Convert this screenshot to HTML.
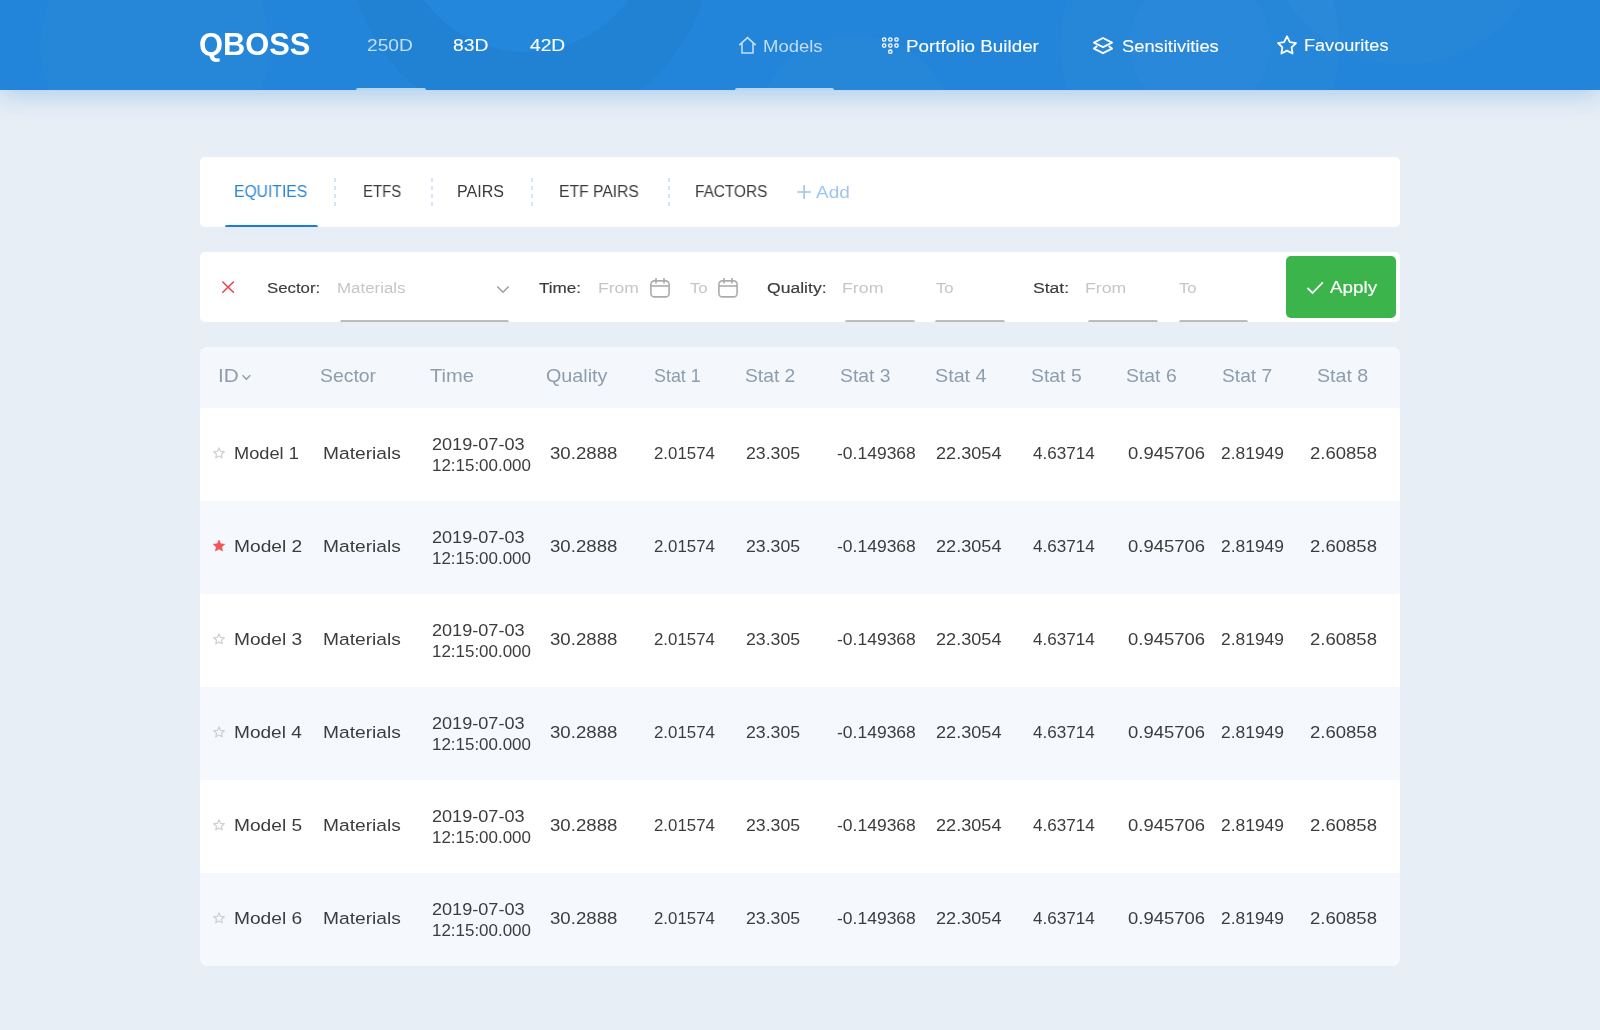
<!DOCTYPE html>
<html><head><meta charset="utf-8">
<style>
html,body{margin:0;padding:0;}
body{width:1600px;height:1030px;overflow:hidden;background:#e7eef6;position:relative;font-family:"Liberation Sans",sans-serif;}
.t{position:absolute;white-space:nowrap;line-height:1;transform-origin:0 0;will-change:transform;}
.abs{position:absolute;}
#hdr{position:absolute;left:0;top:0;width:1600px;height:90px;background:#2285d9;overflow:hidden;}
#hshadow{position:absolute;left:0;top:0;width:1600px;height:90px;box-shadow:0 4px 24px rgba(40,130,215,0.32);}
.card{position:absolute;background:#fff;border-radius:5px;}
.row{position:absolute;left:200px;width:1200px;height:93px;}
</style></head><body>
<div id="hshadow"></div>
<div id="hdr">
  <svg class="abs" style="left:0;top:0" width="1600" height="90">
    <circle cx="155" cy="45" r="115" fill="#ffffff" opacity="0.018"/>
    <circle cx="530" cy="-52" r="180" fill="#000000" opacity="0.02"/>
    <circle cx="526" cy="-75" r="127" fill="#2388dc"/>
    <circle cx="855" cy="135" r="100" fill="#ffffff" opacity="0.018"/>
    <circle cx="1200" cy="45" r="140" fill="#ffffff" opacity="0.018"/>
    <circle cx="1200" cy="45" r="70" fill="#ffffff" opacity="0.015"/>
    <circle cx="1405" cy="-75" r="140" fill="#ffffff" opacity="0.02"/>
  </svg>
  <div class="abs" style="left:356px;top:88px;width:70px;height:2px;background:#b6d7f4;border-radius:2px 2px 0 0"></div>
  <div class="abs" style="left:734.5px;top:88px;width:99.5px;height:2px;background:#b6d7f4;border-radius:2px 2px 0 0"></div>
  <svg class="abs" style="left:0;top:0" width="1600" height="90" fill="none">
    <!-- house -->
    <path d="M739.3 45.2 L747.5 37.6 L755.7 45.2 M742 43 V53 H753 V43" stroke="#c3ddf6" stroke-width="1.6" stroke-linejoin="miter"/>
    <!-- keypad -->
    <g stroke="#fff" stroke-width="1.3">
      <circle cx="884.2" cy="39.5" r="1.7"/><circle cx="890.3" cy="39.5" r="1.7"/><circle cx="896.5" cy="39.5" r="1.7"/>
      <circle cx="884.2" cy="45.6" r="1.7"/><circle cx="890.3" cy="45.6" r="1.7"/><circle cx="896.5" cy="45.6" r="1.7"/>
      <circle cx="890.3" cy="51.7" r="1.7"/>
    </g>
    <!-- layers -->
    <path d="M1103 38 L1112 42.6 L1103 47.2 L1094 42.6 Z" stroke="#fff" stroke-width="1.9" stroke-linejoin="round"/>
    <path d="M1097.3 46 L1094 48.6 L1103 53.2 L1112 48.6 L1108.7 46" stroke="#fff" stroke-width="1.9" stroke-linejoin="round"/>
    <!-- star -->
    <path d="M1287 36.3 L1289.9 42.2 L1296 43.1 L1291.6 47.4 L1292.6 53.5 L1287 50.6 L1281.4 53.5 L1282.4 47.4 L1278 43.1 L1284.1 42.2 Z" stroke="#fff" stroke-width="1.8" stroke-linejoin="round"/>
  </svg>
</div>

<!-- tab card -->
<div class="card" style="left:200px;top:157px;width:1200px;height:70px;"></div>
<div class="abs" style="left:225px;top:225px;width:93px;height:2px;background:#1a7cd6;border-radius:2px 2px 0 0;box-shadow:0 0 14px rgba(26,124,214,0.10)"></div>
<svg class="abs" style="left:0;top:0" width="1600" height="330" fill="none">
  <g stroke="#d3e5f6" stroke-width="2" stroke-dasharray="4 4">
    <line x1="335" y1="178" x2="335" y2="208"/>
    <line x1="432" y1="178" x2="432" y2="208"/>
    <line x1="532" y1="178" x2="532" y2="208"/>
    <line x1="669" y1="178" x2="669" y2="208"/>
  </g>
  <path d="M804.1 185 V199 M797.2 192 H811" stroke="#9dc6ee" stroke-width="1.6"/>
</svg>

<!-- filter card -->
<div class="card" style="left:200px;top:252px;width:1200px;height:70px;"></div>
<div class="abs" style="left:1286px;top:256px;width:110px;height:62px;background:#3bb44b;border-radius:5px"></div>
<svg class="abs" style="left:0;top:0" width="1600" height="330" fill="none">
  <path d="M222.8 282 L233.4 292.3 M233.4 282 L222.8 292.3" stroke="#e8474d" stroke-width="1.6" stroke-linecap="round"/>
  <path d="M497.3 286.5 L503 292.2 L508.7 286.5" stroke="#a0a0a0" stroke-width="1.6"/>
  <g stroke="#ababab" stroke-width="1.6">
    <rect x="650.9" y="280.9" width="18.2" height="16" rx="3.5"/>
    <line x1="651" y1="286" x2="669" y2="286"/>
    <line x1="656" y1="278" x2="656" y2="283.5"/>
    <line x1="664" y1="278" x2="664" y2="283.5"/>
    <rect x="718.9" y="280.9" width="18.2" height="16" rx="3.5"/>
    <line x1="719" y1="286" x2="737" y2="286"/>
    <line x1="724" y1="278" x2="724" y2="283.5"/>
    <line x1="732" y1="278" x2="732" y2="283.5"/>
  </g>
  <path d="M1307.5 288 L1312.5 293 L1322.8 282.3" stroke="#fff" stroke-width="1.8"/>
</svg>
<div class="abs" style="left:339.5px;top:320px;width:169.5px;height:2px;background:#bcbcbc;border-radius:2px 2px 0 0"></div>
<div class="abs" style="left:845.3px;top:320px;width:69.5px;height:2px;background:#bcbcbc;border-radius:2px 2px 0 0"></div>
<div class="abs" style="left:935.2px;top:320px;width:69.7px;height:2px;background:#bcbcbc;border-radius:2px 2px 0 0"></div>
<div class="abs" style="left:1088.3px;top:320px;width:69.7px;height:2px;background:#bcbcbc;border-radius:2px 2px 0 0"></div>
<div class="abs" style="left:1178.5px;top:320px;width:69.5px;height:2px;background:#bcbcbc;border-radius:2px 2px 0 0"></div>

<!-- table -->
<div class="abs" style="left:200px;top:347px;width:1200px;height:619px;border-radius:8px;overflow:hidden;background:#fff">
  <div class="abs" style="left:0;top:0;width:1200px;height:61px;background:#f4f8fd"></div>
  <div class="abs" style="left:0;top:154px;width:1200px;height:93px;background:#f5f9fe"></div>
  <div class="abs" style="left:0;top:340px;width:1200px;height:93px;background:#f5f9fe"></div>
  <div class="abs" style="left:0;top:526px;width:1200px;height:93px;background:#f5f9fe"></div>
</div>
<svg class="abs" style="left:0;top:0" width="1600" height="1030" fill="none">
  <path d="M242.5 375.3 L246.4 379.2 L250.3 375.3" stroke="#8d9dac" stroke-width="1.4"/>
  <g id="stars" stroke-linejoin="round">
  </g>
</svg>
<div class="t" style="left:199.04px;top:29.04px;font-size:30.55px;color:#fff;font-weight:700;transform:scaleX(1.0088);">QBOSS</div>
<div class="t" style="left:366.98px;top:37.37px;font-size:16.45px;color:#c3ddf6;transform:scaleX(1.1656);">250D</div>
<div class="t" style="left:453.32px;top:37.37px;font-size:16.45px;color:#fff;transform:scaleX(1.1757);-webkit-text-stroke:0.1px #fff;">83D</div>
<div class="t" style="left:529.86px;top:37.37px;font-size:16.45px;color:#fff;transform:scaleX(1.1674);-webkit-text-stroke:0.1px #fff;">42D</div>
<div class="t" style="left:763.21px;top:38.39px;font-size:17.02px;color:#c3ddf6;transform:scaleX(1.0863);">Models</div>
<div class="t" style="left:906.26px;top:38.82px;font-size:16.87px;color:#fff;transform:scaleX(1.1166);-webkit-text-stroke:0.1px #fff;">Portfolio Builder</div>
<div class="t" style="left:1121.59px;top:39.01px;font-size:16.95px;color:#fff;transform:scaleX(1.0818);-webkit-text-stroke:0.1px #fff;">Sensitivities</div>
<div class="t" style="left:1304.41px;top:38.04px;font-size:16.73px;color:#fff;transform:scaleX(1.0820);-webkit-text-stroke:0.1px #fff;">Favourites</div>
<div class="t" style="left:234.27px;top:184.46px;font-size:16.00px;color:#2a86d6;transform:scaleX(0.9801);">EQUITIES</div>
<div class="t" style="left:362.83px;top:184.46px;font-size:16.00px;color:#3b3b3b;transform:scaleX(0.9333);">ETFS</div>
<div class="t" style="left:456.75px;top:184.46px;font-size:16.00px;color:#3b3b3b;transform:scaleX(1.0028);">PAIRS</div>
<div class="t" style="left:558.78px;top:184.46px;font-size:16.00px;color:#3b3b3b;transform:scaleX(0.9796);">ETF PAIRS</div>
<div class="t" style="left:694.80px;top:184.46px;font-size:16.00px;color:#3b3b3b;transform:scaleX(0.9622);">FACTORS</div>
<div class="t" style="left:816.40px;top:183.59px;font-size:16.44px;color:#9dc6ee;transform:scaleX(1.1571);">Add</div>
<div class="t" style="left:266.88px;top:281.46px;font-size:14.69px;color:#3b3b3b;transform:scaleX(1.1441);-webkit-text-stroke:0.15px #3b3b3b;">Sector:</div>
<div class="t" style="left:336.56px;top:281.46px;font-size:14.69px;color:#c6c6c6;transform:scaleX(1.1492);">Materials</div>
<div class="t" style="left:539.06px;top:281.46px;font-size:14.69px;color:#3b3b3b;transform:scaleX(1.1639);-webkit-text-stroke:0.15px #3b3b3b;">Time:</div>
<div class="t" style="left:597.51px;top:281.46px;font-size:14.69px;color:#c6c6c6;transform:scaleX(1.1938);">From</div>
<div class="t" style="left:689.57px;top:281.46px;font-size:14.69px;color:#c6c6c6;transform:scaleX(1.1350);">To</div>
<div class="t" style="left:766.55px;top:281.46px;font-size:14.69px;color:#3b3b3b;transform:scaleX(1.1958);-webkit-text-stroke:0.15px #3b3b3b;">Quality:</div>
<div class="t" style="left:842.19px;top:281.46px;font-size:14.69px;color:#c6c6c6;transform:scaleX(1.2093);">From</div>
<div class="t" style="left:935.87px;top:281.46px;font-size:14.69px;color:#c6c6c6;transform:scaleX(1.1350);">To</div>
<div class="t" style="left:1033.35px;top:281.46px;font-size:14.69px;color:#3b3b3b;transform:scaleX(1.1947);-webkit-text-stroke:0.15px #3b3b3b;">Stat:</div>
<div class="t" style="left:1085.10px;top:281.46px;font-size:14.69px;color:#c6c6c6;transform:scaleX(1.2031);">From</div>
<div class="t" style="left:1178.57px;top:281.46px;font-size:14.69px;color:#c6c6c6;transform:scaleX(1.1350);">To</div>
<div class="t" style="left:1330.00px;top:279.52px;font-size:16.87px;color:#fff;transform:scaleX(1.1157);-webkit-text-stroke:0.15px #fff;">Apply</div>
<div class="t" style="left:218.10px;top:368.18px;font-size:17.75px;color:#8d9dac;transform:scaleX(1.1672);">ID</div>
<div class="t" style="left:319.64px;top:368.18px;font-size:17.75px;color:#8d9dac;transform:scaleX(1.0933);">Sector</div>
<div class="t" style="left:430.48px;top:368.18px;font-size:17.75px;color:#8d9dac;transform:scaleX(1.1322);">Time</div>
<div class="t" style="left:546.33px;top:368.18px;font-size:17.75px;color:#8d9dac;transform:scaleX(1.1126);">Quality</div>
<div class="t" style="left:653.82px;top:368.18px;font-size:17.75px;color:#8d9dac;transform:scaleX(1.0084);">Stat 1</div>
<div class="t" style="left:745.05px;top:368.18px;font-size:17.75px;color:#8d9dac;transform:scaleX(1.0846);">Stat 2</div>
<div class="t" style="left:839.95px;top:368.18px;font-size:17.75px;color:#8d9dac;transform:scaleX(1.0883);">Stat 3</div>
<div class="t" style="left:934.63px;top:368.18px;font-size:17.75px;color:#8d9dac;transform:scaleX(1.1111);">Stat 4</div>
<div class="t" style="left:1031.04px;top:368.18px;font-size:17.75px;color:#8d9dac;transform:scaleX(1.0927);">Stat 5</div>
<div class="t" style="left:1126.14px;top:368.18px;font-size:17.75px;color:#8d9dac;transform:scaleX(1.0927);">Stat 6</div>
<div class="t" style="left:1221.65px;top:368.18px;font-size:17.75px;color:#8d9dac;transform:scaleX(1.0824);">Stat 7</div>
<div class="t" style="left:1317.03px;top:368.18px;font-size:17.75px;color:#8d9dac;transform:scaleX(1.1039);">Stat 8</div>
<div class="t" style="left:233.55px;top:445.25px;font-size:17.31px;color:#3c3c3c;transform:scaleX(1.0537);">Model 1</div>
<div class="t" style="left:322.78px;top:445.25px;font-size:17.31px;color:#3c3c3c;transform:scaleX(1.1088);">Materials</div>
<div class="t" style="left:432.46px;top:435.92px;font-size:16.17px;color:#3c3c3c;transform:scaleX(1.1198);">2019-07-03</div>
<div class="t" style="left:432.03px;top:458.03px;font-size:16.74px;color:#3c3c3c;transform:scaleX(1.0128);">12:15:00.000</div>
<div class="t" style="left:550.20px;top:445.75px;font-size:16.60px;color:#3c3c3c;transform:scaleX(1.1234);">30.2888</div>
<div class="t" style="left:653.91px;top:445.75px;font-size:16.60px;color:#3c3c3c;transform:scaleX(1.0145);">2.01574</div>
<div class="t" style="left:746.27px;top:445.75px;font-size:16.60px;color:#3c3c3c;transform:scaleX(1.0660);">23.305</div>
<div class="t" style="left:837.11px;top:445.75px;font-size:16.60px;color:#3c3c3c;transform:scaleX(1.0549);">-0.149368</div>
<div class="t" style="left:935.95px;top:445.75px;font-size:16.60px;color:#3c3c3c;transform:scaleX(1.0911);">22.3054</div>
<div class="t" style="left:1033.01px;top:445.75px;font-size:16.60px;color:#3c3c3c;transform:scaleX(1.0295);">4.63714</div>
<div class="t" style="left:1127.51px;top:445.75px;font-size:16.60px;color:#3c3c3c;transform:scaleX(1.1118);">0.945706</div>
<div class="t" style="left:1221.08px;top:445.75px;font-size:16.60px;color:#3c3c3c;transform:scaleX(1.0496);">2.81949</div>
<div class="t" style="left:1310.02px;top:445.75px;font-size:16.60px;color:#3c3c3c;transform:scaleX(1.1162);">2.60858</div>
<div class="t" style="left:233.77px;top:538.25px;font-size:17.31px;color:#3c3c3c;transform:scaleX(1.1095);">Model 2</div>
<div class="t" style="left:322.78px;top:538.25px;font-size:17.31px;color:#3c3c3c;transform:scaleX(1.1088);">Materials</div>
<div class="t" style="left:432.46px;top:528.92px;font-size:16.17px;color:#3c3c3c;transform:scaleX(1.1198);">2019-07-03</div>
<div class="t" style="left:432.03px;top:551.03px;font-size:16.74px;color:#3c3c3c;transform:scaleX(1.0128);">12:15:00.000</div>
<div class="t" style="left:550.20px;top:538.75px;font-size:16.60px;color:#3c3c3c;transform:scaleX(1.1234);">30.2888</div>
<div class="t" style="left:653.91px;top:538.75px;font-size:16.60px;color:#3c3c3c;transform:scaleX(1.0145);">2.01574</div>
<div class="t" style="left:746.27px;top:538.75px;font-size:16.60px;color:#3c3c3c;transform:scaleX(1.0660);">23.305</div>
<div class="t" style="left:837.11px;top:538.75px;font-size:16.60px;color:#3c3c3c;transform:scaleX(1.0549);">-0.149368</div>
<div class="t" style="left:935.95px;top:538.75px;font-size:16.60px;color:#3c3c3c;transform:scaleX(1.0911);">22.3054</div>
<div class="t" style="left:1033.01px;top:538.75px;font-size:16.60px;color:#3c3c3c;transform:scaleX(1.0295);">4.63714</div>
<div class="t" style="left:1127.51px;top:538.75px;font-size:16.60px;color:#3c3c3c;transform:scaleX(1.1118);">0.945706</div>
<div class="t" style="left:1221.08px;top:538.75px;font-size:16.60px;color:#3c3c3c;transform:scaleX(1.0496);">2.81949</div>
<div class="t" style="left:1310.02px;top:538.75px;font-size:16.60px;color:#3c3c3c;transform:scaleX(1.1162);">2.60858</div>
<div class="t" style="left:233.78px;top:631.25px;font-size:17.31px;color:#3c3c3c;transform:scaleX(1.1072);">Model 3</div>
<div class="t" style="left:322.78px;top:631.25px;font-size:17.31px;color:#3c3c3c;transform:scaleX(1.1088);">Materials</div>
<div class="t" style="left:432.46px;top:621.92px;font-size:16.17px;color:#3c3c3c;transform:scaleX(1.1198);">2019-07-03</div>
<div class="t" style="left:432.03px;top:644.03px;font-size:16.74px;color:#3c3c3c;transform:scaleX(1.0128);">12:15:00.000</div>
<div class="t" style="left:550.20px;top:631.75px;font-size:16.60px;color:#3c3c3c;transform:scaleX(1.1234);">30.2888</div>
<div class="t" style="left:653.91px;top:631.75px;font-size:16.60px;color:#3c3c3c;transform:scaleX(1.0145);">2.01574</div>
<div class="t" style="left:746.27px;top:631.75px;font-size:16.60px;color:#3c3c3c;transform:scaleX(1.0660);">23.305</div>
<div class="t" style="left:837.11px;top:631.75px;font-size:16.60px;color:#3c3c3c;transform:scaleX(1.0549);">-0.149368</div>
<div class="t" style="left:935.95px;top:631.75px;font-size:16.60px;color:#3c3c3c;transform:scaleX(1.0911);">22.3054</div>
<div class="t" style="left:1033.01px;top:631.75px;font-size:16.60px;color:#3c3c3c;transform:scaleX(1.0295);">4.63714</div>
<div class="t" style="left:1127.51px;top:631.75px;font-size:16.60px;color:#3c3c3c;transform:scaleX(1.1118);">0.945706</div>
<div class="t" style="left:1221.08px;top:631.75px;font-size:16.60px;color:#3c3c3c;transform:scaleX(1.0496);">2.81949</div>
<div class="t" style="left:1310.02px;top:631.75px;font-size:16.60px;color:#3c3c3c;transform:scaleX(1.1162);">2.60858</div>
<div class="t" style="left:233.78px;top:724.25px;font-size:17.31px;color:#3c3c3c;transform:scaleX(1.1025);">Model 4</div>
<div class="t" style="left:322.78px;top:724.25px;font-size:17.31px;color:#3c3c3c;transform:scaleX(1.1088);">Materials</div>
<div class="t" style="left:432.46px;top:714.92px;font-size:16.17px;color:#3c3c3c;transform:scaleX(1.1198);">2019-07-03</div>
<div class="t" style="left:432.03px;top:737.03px;font-size:16.74px;color:#3c3c3c;transform:scaleX(1.0128);">12:15:00.000</div>
<div class="t" style="left:550.20px;top:724.75px;font-size:16.60px;color:#3c3c3c;transform:scaleX(1.1234);">30.2888</div>
<div class="t" style="left:653.91px;top:724.75px;font-size:16.60px;color:#3c3c3c;transform:scaleX(1.0145);">2.01574</div>
<div class="t" style="left:746.27px;top:724.75px;font-size:16.60px;color:#3c3c3c;transform:scaleX(1.0660);">23.305</div>
<div class="t" style="left:837.11px;top:724.75px;font-size:16.60px;color:#3c3c3c;transform:scaleX(1.0549);">-0.149368</div>
<div class="t" style="left:935.95px;top:724.75px;font-size:16.60px;color:#3c3c3c;transform:scaleX(1.0911);">22.3054</div>
<div class="t" style="left:1033.01px;top:724.75px;font-size:16.60px;color:#3c3c3c;transform:scaleX(1.0295);">4.63714</div>
<div class="t" style="left:1127.51px;top:724.75px;font-size:16.60px;color:#3c3c3c;transform:scaleX(1.1118);">0.945706</div>
<div class="t" style="left:1221.08px;top:724.75px;font-size:16.60px;color:#3c3c3c;transform:scaleX(1.0496);">2.81949</div>
<div class="t" style="left:1310.02px;top:724.75px;font-size:16.60px;color:#3c3c3c;transform:scaleX(1.1162);">2.60858</div>
<div class="t" style="left:233.78px;top:817.25px;font-size:17.31px;color:#3c3c3c;transform:scaleX(1.1072);">Model 5</div>
<div class="t" style="left:322.78px;top:817.25px;font-size:17.31px;color:#3c3c3c;transform:scaleX(1.1088);">Materials</div>
<div class="t" style="left:432.46px;top:807.92px;font-size:16.17px;color:#3c3c3c;transform:scaleX(1.1198);">2019-07-03</div>
<div class="t" style="left:432.03px;top:830.03px;font-size:16.74px;color:#3c3c3c;transform:scaleX(1.0128);">12:15:00.000</div>
<div class="t" style="left:550.20px;top:817.75px;font-size:16.60px;color:#3c3c3c;transform:scaleX(1.1234);">30.2888</div>
<div class="t" style="left:653.91px;top:817.75px;font-size:16.60px;color:#3c3c3c;transform:scaleX(1.0145);">2.01574</div>
<div class="t" style="left:746.27px;top:817.75px;font-size:16.60px;color:#3c3c3c;transform:scaleX(1.0660);">23.305</div>
<div class="t" style="left:837.11px;top:817.75px;font-size:16.60px;color:#3c3c3c;transform:scaleX(1.0549);">-0.149368</div>
<div class="t" style="left:935.95px;top:817.75px;font-size:16.60px;color:#3c3c3c;transform:scaleX(1.0911);">22.3054</div>
<div class="t" style="left:1033.01px;top:817.75px;font-size:16.60px;color:#3c3c3c;transform:scaleX(1.0295);">4.63714</div>
<div class="t" style="left:1127.51px;top:817.75px;font-size:16.60px;color:#3c3c3c;transform:scaleX(1.1118);">0.945706</div>
<div class="t" style="left:1221.08px;top:817.75px;font-size:16.60px;color:#3c3c3c;transform:scaleX(1.0496);">2.81949</div>
<div class="t" style="left:1310.02px;top:817.75px;font-size:16.60px;color:#3c3c3c;transform:scaleX(1.1162);">2.60858</div>
<div class="t" style="left:233.78px;top:910.25px;font-size:17.31px;color:#3c3c3c;transform:scaleX(1.1072);">Model 6</div>
<div class="t" style="left:322.78px;top:910.25px;font-size:17.31px;color:#3c3c3c;transform:scaleX(1.1088);">Materials</div>
<div class="t" style="left:432.46px;top:900.92px;font-size:16.17px;color:#3c3c3c;transform:scaleX(1.1198);">2019-07-03</div>
<div class="t" style="left:432.03px;top:923.03px;font-size:16.74px;color:#3c3c3c;transform:scaleX(1.0128);">12:15:00.000</div>
<div class="t" style="left:550.20px;top:910.75px;font-size:16.60px;color:#3c3c3c;transform:scaleX(1.1234);">30.2888</div>
<div class="t" style="left:653.91px;top:910.75px;font-size:16.60px;color:#3c3c3c;transform:scaleX(1.0145);">2.01574</div>
<div class="t" style="left:746.27px;top:910.75px;font-size:16.60px;color:#3c3c3c;transform:scaleX(1.0660);">23.305</div>
<div class="t" style="left:837.11px;top:910.75px;font-size:16.60px;color:#3c3c3c;transform:scaleX(1.0549);">-0.149368</div>
<div class="t" style="left:935.95px;top:910.75px;font-size:16.60px;color:#3c3c3c;transform:scaleX(1.0911);">22.3054</div>
<div class="t" style="left:1033.01px;top:910.75px;font-size:16.60px;color:#3c3c3c;transform:scaleX(1.0295);">4.63714</div>
<div class="t" style="left:1127.51px;top:910.75px;font-size:16.60px;color:#3c3c3c;transform:scaleX(1.1118);">0.945706</div>
<div class="t" style="left:1221.08px;top:910.75px;font-size:16.60px;color:#3c3c3c;transform:scaleX(1.0496);">2.81949</div>
<div class="t" style="left:1310.02px;top:910.75px;font-size:16.60px;color:#3c3c3c;transform:scaleX(1.1162);">2.60858</div>
<svg class="abs" style="left:0;top:0" width="1600" height="1030">
<path d="M219.00,447.90 L220.53,451.30 L224.23,451.70 L221.47,454.20 L222.23,457.85 L219.00,456.00 L215.77,457.85 L216.53,454.20 L213.77,451.70 L217.47,451.30 Z" fill="none" stroke="#cfcfcf" stroke-width="1.2" stroke-linejoin="round"/>
<path d="M219.00,540.00 L220.70,543.75 L224.80,544.21 L221.76,547.00 L222.59,551.04 L219.00,549.00 L215.41,551.04 L216.24,547.00 L213.20,544.21 L217.30,543.75 Z" fill="#f05656" stroke="#f05656" stroke-width="0.6" stroke-linejoin="round"/>
<path d="M219.00,633.90 L220.53,637.30 L224.23,637.70 L221.47,640.20 L222.23,643.85 L219.00,642.00 L215.77,643.85 L216.53,640.20 L213.77,637.70 L217.47,637.30 Z" fill="none" stroke="#cfcfcf" stroke-width="1.2" stroke-linejoin="round"/>
<path d="M219.00,726.90 L220.53,730.30 L224.23,730.70 L221.47,733.20 L222.23,736.85 L219.00,735.00 L215.77,736.85 L216.53,733.20 L213.77,730.70 L217.47,730.30 Z" fill="none" stroke="#cfcfcf" stroke-width="1.2" stroke-linejoin="round"/>
<path d="M219.00,819.90 L220.53,823.30 L224.23,823.70 L221.47,826.20 L222.23,829.85 L219.00,828.00 L215.77,829.85 L216.53,826.20 L213.77,823.70 L217.47,823.30 Z" fill="none" stroke="#cfcfcf" stroke-width="1.2" stroke-linejoin="round"/>
<path d="M219.00,912.90 L220.53,916.30 L224.23,916.70 L221.47,919.20 L222.23,922.85 L219.00,921.00 L215.77,922.85 L216.53,919.20 L213.77,916.70 L217.47,916.30 Z" fill="none" stroke="#cfcfcf" stroke-width="1.2" stroke-linejoin="round"/>
</svg>
</body></html>
